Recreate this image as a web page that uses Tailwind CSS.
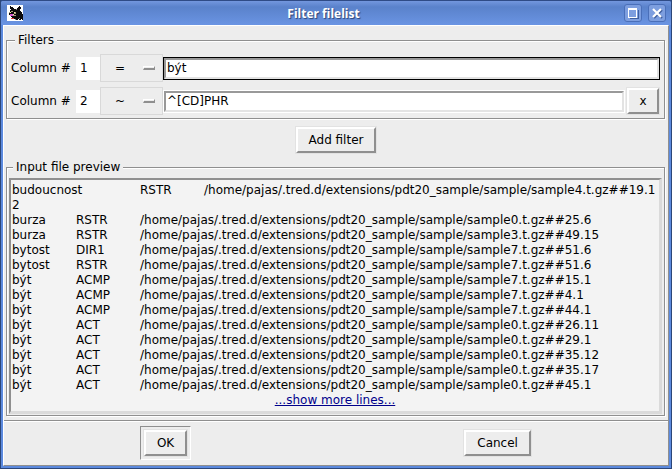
<!DOCTYPE html>
<html lang="en">
<head>
<meta charset="utf-8">
<title>Filter filelist</title>
<script src="https://cdn.jsdelivr.net/npm/@tailwindcss/browser@4"></script>
</head>
<body class="bg-[#2c4678]">
<div class="flex min-h-screen flex-col overflow-hidden rounded-t-[3px] border border-t-[#2f4b86] border-r-[#2c4678] border-b-[#2c4678] border-l-[#2c4678] bg-[#5c8ade] px-[2px] pb-[2px] font-['DejaVu_Sans',sans-serif] text-[12px] leading-[15px] text-black">
  <header class="-mx-[2px] flex h-6 items-center bg-linear-to-b from-[#7397de] via-[#5a82cb] via-25% to-[#6a94e3] pr-[5px] pl-[6px]">
    <svg class="size-4" viewBox="0 0 16 16" shape-rendering="crispEdges" aria-hidden="true">
      <path fill="#fff" d="M0 0h16v16H0z"/>
      <path fill="#0c0a0c" d="M3 1h1v1h2v1h1v1h2v1h1V3h1V2h1V1h1v1h1v2h-1v2h1v1h1v2h1v6h-1v-1h-1v1h-2v-1h-1v1h-2v-1H9v1H8v-1H7v-1H5v-1H4v-1H3v-1H2V8h1V5h1V4H3z"/>
      <path fill="#a9a07c" d="M4 6h2v1H4zM2 7h1v1H2zM7 7h2v2H7zM6 10h3v1H6z"/>
      <path fill="#f6e9a8" d="M3 7h1v1H3zM7 7h1v1H7zM6 9h1v1H6z"/>
      <path fill="#d857d6" d="M3 9h3v2H3z"/>
      <path fill="#e0403c" d="M4 13h3v1H4z"/>
      <path fill="#8a8a8a" d="M9 4h1v1H9zM12 13h1v1h-1zM8 14h1v1H8z"/>
    </svg>
    <h1 class="flex-1 text-center font-['Open_Sans',sans-serif] text-[12px] font-bold text-white [text-shadow:1px_1px_1px_#2b4478]">Filter filelist</h1>
    <div class="flex gap-[6px]">
      <button class="flex size-[18px] items-center justify-center rounded-[3px] border border-[#4a6fb9] bg-[#7d9edf]" aria-label="Maximize">
        <svg class="size-3" viewBox="0 0 12 12" fill="none" shape-rendering="crispEdges"><path stroke="#3f5f9f" d="M3 11.5h8.500V3"/><path stroke="#fff" d="M1.500 2v8.500h8V2"/><path fill="#fff" d="M1 1h9v2H1z"/></svg>
      </button>
      <button class="flex size-[18px] items-center justify-center rounded-[3px] border border-[#4a6fb9] bg-[#7d9edf]" aria-label="Close">
        <svg class="size-3" viewBox="0 0 12 12" fill="none" stroke-width="2.200"><path stroke="#3f5f9f" d="M3 3l8 8M11 3l-8 8"/><path stroke="#fff" d="M2 2l8 8M10 2l-8 8"/></svg>
      </button>
    </div>
  </header>

  <main class="flex flex-1 flex-col border border-t-white border-r-[#8f8f8f] border-b-[#8f8f8f] border-l-white bg-[#ededed]">
    <div class="flex flex-1 flex-col px-[2px] pt-[7px] pb-1">
      <fieldset class="mr-px grid gap-[5px] border border-[#8f8f8f] px-1 pt-[6px] pb-[3px] shadow-[1px_1px_0_#fff,inset_1px_1px_0_#fff]">
        <legend class="ml-1 bg-[#ededed] px-[3px]">Filters</legend>
        <div class="flex h-7 items-center">
          <label class="w-[65px]" for="col1">Column #</label>
          <input id="col1" class="h-[23px] w-6 bg-white px-1 outline-none" value="1">
          <button class="flex h-full w-[63px] items-center justify-between border border-[#d9d9d9] pr-[7px] pl-[14px]" aria-label="First operator">
            <span>=</span><span class="h-1 w-3 border border-t-white border-r-[#8f8f8f] border-b-[#8f8f8f] border-l-white border-b-2 bg-[#ededed]"></span>
          </button>
          <div class="flex-1 border border-black"><input aria-label="First value" class="block h-[21px] w-full border-2 border-t-[#999] border-r-[#e3e3e3] border-b-[#e3e3e3] border-l-[#999] bg-white px-px outline-none" value="být"></div>
        </div>
        <div class="flex h-7 items-center">
          <label class="w-[65px]" for="col2">Column #</label>
          <input id="col2" class="h-[23px] w-6 bg-white px-1 outline-none" value="2">
          <button class="flex h-full w-[63px] items-center justify-between border border-[#d9d9d9] pr-[7px] pl-[14px]" aria-label="Second operator">
            <span>~</span><span class="h-1 w-3 border border-t-white border-r-[#8f8f8f] border-b-[#8f8f8f] border-l-white border-b-2 bg-[#ededed]"></span>
          </button>
          <div class="flex-1 border border-white"><input aria-label="Second value" class="block h-[21px] w-full border-2 border-t-[#999] border-r-[#e3e3e3] border-b-[#e3e3e3] border-l-[#999] bg-white px-px outline-none" value="^[CD]PHR"></div>
          <div class="ml-px border border-[#e2e2e2]"><button class="block h-[26px] w-8 border-2 border-t-white border-r-[#8f8f8f] border-b-[#8f8f8f] border-l-white bg-[#ededed]">x</button></div>
        </div>
      </fieldset>

      <div class="flex justify-center pt-[7px] pb-[6px]">
        <div class="border border-[#e2e2e2]"><button class="block h-[26px] border-2 border-t-white border-r-[#8f8f8f] border-b-[#8f8f8f] border-l-white bg-[#ededed] px-[11px]">Add filter</button></div>
      </div>

      <fieldset class="mr-px flex-1 border border-[#8f8f8f] px-[2px] pt-[3px] pb-px shadow-[1px_1px_0_#fff,inset_1px_1px_0_#fff]">
        <legend class="ml-1 bg-[#ededed] px-[3px]">Input file preview</legend>
        <div class="border-t-2 border-r-[3px] border-b-[3px] border-l-2 border-t-[#8f8f8f] border-r-[#dadada] border-b-[#dadada] border-l-[#8f8f8f] bg-[#f3f3f3] px-px pt-[3px] pb-[3px]">
          <pre class="font-['DejaVu_Sans',sans-serif] break-all whitespace-pre-wrap [tab-size:64px]">budoucnost	RSTR	/home/pajas/.tred.d/extensions/pdt20_sample/sample/sample4.t.gz##19.12
burza	RSTR	/home/pajas/.tred.d/extensions/pdt20_sample/sample/sample0.t.gz##25.6
burza	RSTR	/home/pajas/.tred.d/extensions/pdt20_sample/sample/sample3.t.gz##49.15
bytost	DIR1	/home/pajas/.tred.d/extensions/pdt20_sample/sample/sample7.t.gz##51.6
bytost	RSTR	/home/pajas/.tred.d/extensions/pdt20_sample/sample/sample7.t.gz##51.6
být	ACMP	/home/pajas/.tred.d/extensions/pdt20_sample/sample/sample7.t.gz##15.1
být	ACMP	/home/pajas/.tred.d/extensions/pdt20_sample/sample/sample7.t.gz##4.1
být	ACMP	/home/pajas/.tred.d/extensions/pdt20_sample/sample/sample7.t.gz##44.1
být	ACT	/home/pajas/.tred.d/extensions/pdt20_sample/sample/sample0.t.gz##26.11
být	ACT	/home/pajas/.tred.d/extensions/pdt20_sample/sample/sample0.t.gz##29.1
být	ACT	/home/pajas/.tred.d/extensions/pdt20_sample/sample/sample0.t.gz##35.12
být	ACT	/home/pajas/.tred.d/extensions/pdt20_sample/sample/sample0.t.gz##35.17
být	ACT	/home/pajas/.tred.d/extensions/pdt20_sample/sample/sample0.t.gz##45.1</pre>
          <p class="text-center"><a href="#" class="text-[#00008b] underline">...show more lines...</a></p>
        </div>
      </fieldset>
    </div>

    <footer class="flex items-center justify-around border-t border-[#8f8f8f] pt-[5px] pb-[5px] shadow-[inset_0_1px_0_#fff]">
      <div class="border border-t-[#8f8f8f] border-r-white border-b-white border-l-[#8f8f8f] p-[2px]"><div class="border border-[#e2e2e2]"><button class="block h-[26px] w-[43px] border-2 border-t-white border-r-[#8f8f8f] border-b-[#8f8f8f] border-l-white bg-[#ededed]">OK</button></div></div>
      <div class="border border-[#e2e2e2]"><button class="block h-[26px] border-2 border-t-white border-r-[#8f8f8f] border-b-[#8f8f8f] border-l-white bg-[#ededed] px-[11px]">Cancel</button></div>
    </footer>
  </main>
</div>
</body>
</html>
